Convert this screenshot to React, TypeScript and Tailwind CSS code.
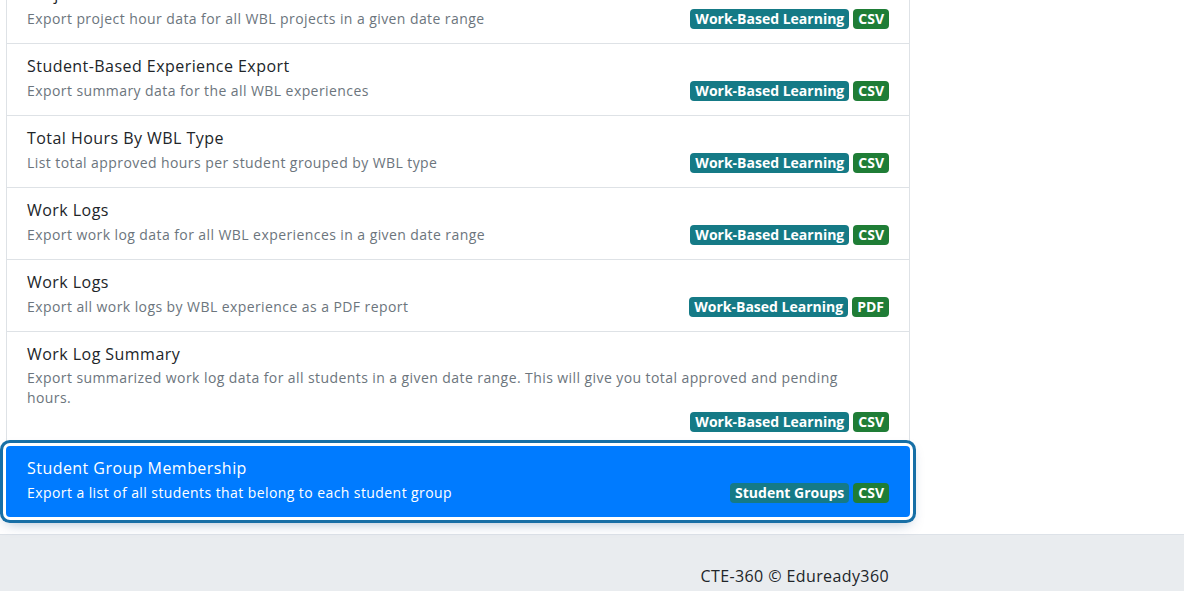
import React from 'react';

type Report = {
  title: string;
  description: string;
  category: string;
  format: 'CSV' | 'PDF';
  active?: boolean;
};

const REPORTS: Report[] = [
  {
    title: 'Project Hours',
    description: 'Export project hour data for all WBL projects in a given date range',
    category: 'Work-Based Learning',
    format: 'CSV',
  },
  {
    title: 'Student-Based Experience Export',
    description: 'Export summary data for the all WBL experiences',
    category: 'Work-Based Learning',
    format: 'CSV',
  },
  {
    title: 'Total Hours By WBL Type',
    description: 'List total approved hours per student grouped by WBL type',
    category: 'Work-Based Learning',
    format: 'CSV',
  },
  {
    title: 'Work Logs',
    description: 'Export work log data for all WBL experiences in a given date range',
    category: 'Work-Based Learning',
    format: 'CSV',
  },
  {
    title: 'Work Logs',
    description: 'Export all work logs by WBL experience as a PDF report',
    category: 'Work-Based Learning',
    format: 'PDF',
  },
  {
    title: 'Work Log Summary',
    description:
      'Export summarized work log data for all students in a given date range. This will give you total approved and pending hours.',
    category: 'Work-Based Learning',
    format: 'CSV',
  },
  {
    title: 'Student Group Membership',
    description: 'Export a list of all students that belong to each student group',
    category: 'Student Groups',
    format: 'CSV',
    active: true,
  },
];

const Badge: React.FC<{ children: React.ReactNode; tone: 'teal' | 'green' }> = ({ children, tone }) => (
  <span
    className={`inline-block rounded-[4px] px-[5px] text-[14px] font-bold leading-[20px] text-white ${
      tone === 'teal' ? 'bg-[#157a86]' : 'bg-[#1f7d36]'
    }`}
  >
    {children}
  </span>
);

const ReportItem: React.FC<{ report: Report; last: boolean }> = ({ report, last }) => (
  <a
    href="#"
    className={`block pt-3 pb-[13px] ${
      report.active
        ? 'relative z-10 -mx-px mt-px rounded-[4px] bg-[#007bff] px-[21px] text-white shadow-[0_0_0_3px_#ffffff,0_0_0_6px_#176fa6,0_6px_14px_rgba(0,60,120,0.35)]'
        : `bg-white px-5 ${last ? '' : 'border-b border-[#dee2e6]'}`
    }`}
  >
    <div
      className={`mb-1 text-[16px] leading-5 tracking-[0.45px] ${report.active ? 'text-white' : 'text-[#212529]'}`}
    >
      {report.title}
    </div>
    <div className="flex min-h-[22px] flex-wrap items-center justify-between gap-y-1">
      <p className={`max-w-[840px] text-[14px] leading-5 tracking-[0.42px] ${report.active ? 'text-white' : 'text-[#6c757d]'}`}>
        {report.description}
      </p>
      <div className="ml-auto flex gap-[4px]">
        <Badge tone="teal">{report.category}</Badge>
        <Badge tone="green">{report.format}</Badge>
      </div>
    </div>
  </a>
);

export default function App() {
  return (
    <div className="h-[591px] overflow-hidden bg-white font-['Open_Sans',sans-serif]">
      <main className="pl-[6px] pb-[17px]">
        <div className="-mt-[28px] w-[904px] border-x border-[#dee2e6]">
          {REPORTS.map((r, i) => (
            <ReportItem key={i} report={r} last={i === REPORTS.length - 2 || r.active === true} />
          ))}
        </div>
      </main>
      <footer className="border-t border-[#dde2e8] bg-[#e9ecef] pl-[6px] pt-[29px]">
        <div className="w-[904px] px-[21px] text-right text-[16px] leading-6 tracking-[0.4px] text-[#212529]">
          <p>CTE-360 © Eduready360</p>
          <p className="text-[13px] text-[#6c757d]">
            <a href="#" className="text-[#007bff]">Privacy</a> · <a href="#" className="text-[#007bff]">Terms of Use</a>
          </p>
        </div>
      </footer>
    </div>
  );
}
